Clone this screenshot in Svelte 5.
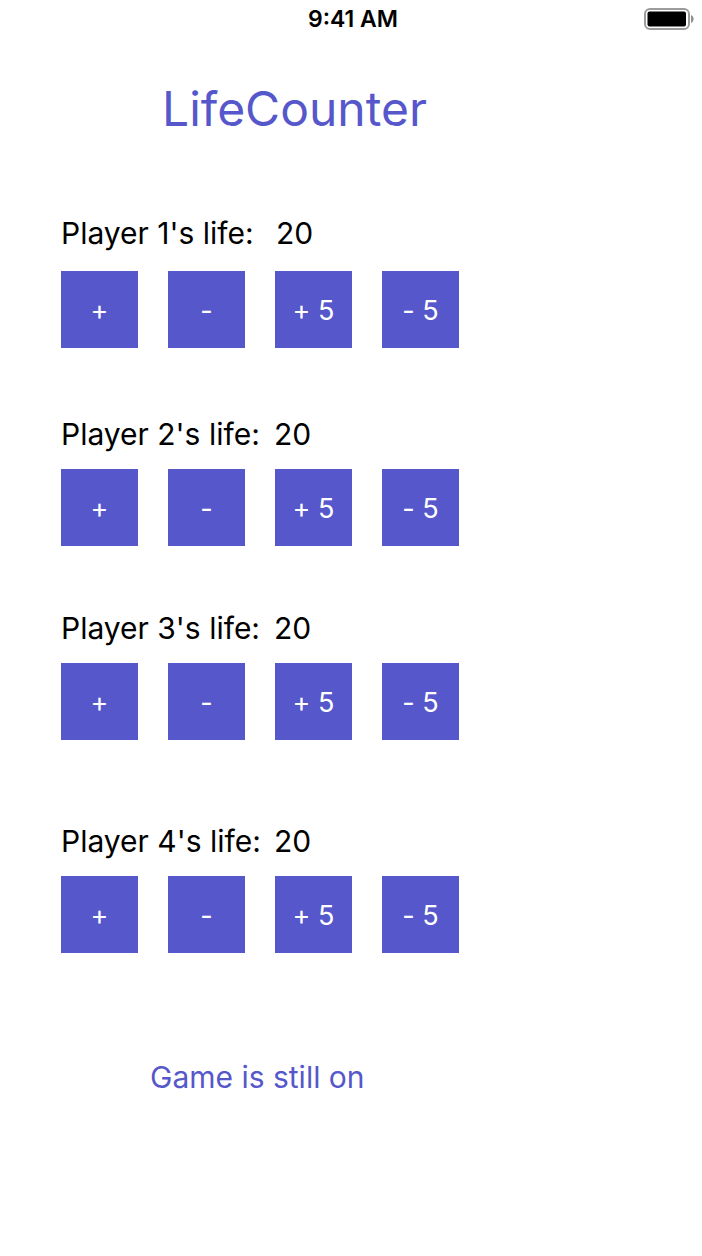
<script>
  let players = $state([
    { id: 1, life: 20 },
    { id: 2, life: 20 },
    { id: 3, life: 20 },
    { id: 4, life: 20 },
  ]);
  const steps = [
    { label: '+', by: 1 },
    { label: '-', by: -1 },
    { label: '+ 5', by: 5 },
    { label: '- 5', by: -5 },
  ];
  let loser = $derived(players.find((p) => p.life <= 0));
</script>

<div class="screen">
  <header class="status">
    <span class="time">9:41 AM</span>
    <svg class="battery" viewBox="0 0 50 22" aria-hidden="true">
      <rect x="1" y="1" width="44" height="20" rx="5" fill="none" stroke="#9b9b9b" stroke-width="2" />
      <rect x="3.5" y="3.5" width="38.5" height="15" rx="2" fill="#000" />
      <path d="M47 7c3.5 1.5 3.5 6.500 0 8z" fill="#8f8f8f" />
    </svg>
  </header>

  <main>
    <h1>LifeCounter</h1>
    {#each players as player (player.id)}
      <section class="player p{player.id}">
        <p class="life">
          <span>Player {player.id}'s life:</span>
          <output>{player.life}</output>
        </p>
        <div class="buttons">
          {#each steps as step}
            <button type="button" onclick={() => (player.life += step.by)}>{step.label}</button>
          {/each}
        </div>
      </section>
    {/each}
    <p class="result">{loser ? `Player ${loser.id} loses!` : 'Game is still on'}</p>
  </main>
</div>

<style>
  :global(body) {
    background: #fff;
  }
  .screen {
    font-family: Inter, 'Liberation Sans', sans-serif;
    color: #000;
  }
  .status {
    display: grid;
    grid-template-columns: 1fr auto 1fr;
    align-items: center;
    height: 38px;
    padding: 0 8px;
  }
  .time {
    grid-column: 2;
    padding-left: 4px;
    font-size: 23px;
    font-weight: 600;
  }
  .battery {
    justify-self: end;
    width: 50px;
    height: 22px;
  }
  main {
    padding: 41px 61px;
  }
  h1 {
    margin: 0 0 74px;
    padding-left: 101px;
    font-size: 48px;
    line-height: 60px;
    font-weight: 400;
    color: #5657cb;
  }
  p {
    margin: 0;
    font-size: 30px;
    line-height: 40px;
  }
  .player {
    display: grid;
    gap: 15px;
    margin-bottom: 66px;
  }
  .p1 {
    gap: 18px;
  }
  .p2 {
    margin-bottom: 62px;
  }
  .p3 {
    margin-bottom: 81px;
  }
  .p4 {
    margin-bottom: 104px;
  }
  .life {
    display: grid;
    grid-template-columns: 213px auto;
    justify-content: start;
  }
  .p1 .life {
    grid-template-columns: 215px auto;
  }
  .buttons {
    display: flex;
    gap: 30px;
  }
  button {
    width: 77px;
    height: 77px;
    padding: 2px 0 0;
    border: 0;
    background: #5657cb;
    color: #fff;
    font: inherit;
    font-size: 27px;
    font-variant-ligatures: no-contextual;
  }
  .result {
    padding-left: 89px;
    color: #5657cb;
  }
</style>
